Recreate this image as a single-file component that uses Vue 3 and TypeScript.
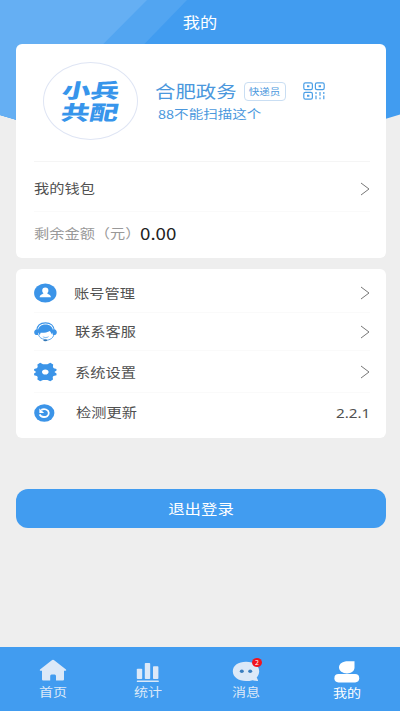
<script setup lang="ts">
interface MenuItem {
  id: 'account' | 'support' | 'settings' | 'update'
  label: string
  value?: string
}
interface Tab {
  id: 'home' | 'stats' | 'message' | 'mine'
  label: string
  badge?: number
}

const menu: MenuItem[] = [
  { id: 'account', label: '账号管理' },
  { id: 'support', label: '联系客服' },
  { id: 'settings', label: '系统设置' },
  { id: 'update', label: '检测更新', value: '2.2.1' },
]
const tabs: Tab[] = [
  { id: 'home', label: '首页' },
  { id: 'stats', label: '统计' },
  { id: 'message', label: '消息', badge: 2 },
  { id: 'mine', label: '我的' },
]
const activeTab: Tab['id'] = 'mine'
</script>

<template>
  <div class="screen">
    <svg class="backdrop" width="400" height="160" viewBox="0 0 400 160" aria-hidden="true">
      <defs>
        <clipPath id="arc"><path d="M0 0H400V114.5Q200 178 0 115Z" /></clipPath>
      </defs>
      <g clip-path="url(#arc)">
        <rect width="400" height="160" fill="#419cf0" />
        <path d="M0 0H187L32 160H0Z" fill="#52a5f1" />
        <path d="M0 0H147L0 148Z" fill="#65aff3" />
      </g>
    </svg>

    <header class="title"><span class="wide">我的</span></header>

    <main>
      <section class="card profile-card">
        <div class="profile">
          <div class="logo">
            <span class="logo-line">小兵</span>
            <span class="logo-line second">共配</span>
          </div>
          <div class="who">
            <div class="name-row">
              <span class="name wide">合肥政务</span>
              <span class="role"><span class="wide">快递员</span></span>
              <svg class="qr" width="22" height="18" viewBox="0 0 22 18" fill="none" stroke="#4b9fe6" stroke-width="1.2">
                <rect x="0.8" y="0.8" width="8.6" height="6.8" rx="1.6" />
                <rect x="12.4" y="0.8" width="8.8" height="6.8" rx="1.6" />
                <rect x="0.8" y="10.4" width="8.6" height="6.8" rx="1.6" />
                <path d="M4 4.2h2.4M15.6 4.2H18M4 13.8h2.4" stroke-width="2" />
                <path d="M13 10v2M13 13.5v3.8M17 10v3.8M17 15.4v1.9M20.8 10v2M20.8 13.5v3.8" />
              </svg>
            </div>
            <span class="nickname wide">88不能扫描这个</span>
          </div>
        </div>
        <div class="wallet">
          <span class="wide">我的钱包</span>
          <svg class="chevron" width="10" height="14" viewBox="0 0 10 14"><path d="M1 1L9 7L1 13" /></svg>
        </div>
        <div class="balance">
          <span class="balance-label wide">剩余金额（元）</span>
          <span class="amount wide">0.00</span>
        </div>
      </section>

      <section class="card menu-card">
        <div v-for="item in menu" :key="item.id" class="menu-row" :class="item.id">
          <svg class="menu-icon" width="23" height="20" viewBox="0 0 23 20">
            <template v-if="item.id === 'account'">
              <ellipse cx="11.3" cy="10" rx="11.2" ry="9.5" fill="#3b94e8" />
              <path d="M11.3 4.5c2 0 3.2 1.3 3.1 3 0 1.3-.6 2.2-1.3 2.8.3 1 3.7.9 3.8 4H5.7c.1-3.1 3.5-3 3.8-4-.7-.6-1.3-1.5-1.3-2.8 0-1.7 1.1-3 3.1-3Z" fill="#fff" />
            </template>
            <template v-else-if="item.id === 'support'">
              <path d="M2.7 9C3 3.7 6.6.9 11.5.9s8.6 2.8 8.8 8.1" fill="none" stroke="#3b94e8" stroke-width="1.3" />
              <path d="M3.800 10C3.800 5 7 2.500 11.500 2.500S19.200 5 19.200 10L18 12.500 15.900 8.900C13 10.600 9 11 6.600 10.700L5.800 13.200Z" fill="#3b94e8" />
              <path d="M4.200 7.500v5.500H2.300C.8 12.600.2 11.600.2 10.200s.9-2.500 2.100-2.700ZM18.800 7.500V13h1.900c1.500-.3 2.100-1.400 2.100-2.800s-.9-2.500-2.100-2.700Z" fill="#3b94e8" />
              <path d="M4.300 12.500C5.500 16 8 17 10.500 17.300M20 12.700c-.9 3.500-4 5.300-7.500 5.600" fill="none" stroke="#3b94e8" stroke-width=".8" />
              <path d="M8.500 14.300c2 1.100 4.700 1 6.500-.3-.5 1.800-1.800 2.200-3.300 2.200s-2.800-.7-3.200-1.900Z" fill="#8dc1f2" />
              <ellipse cx="11.3" cy="18.300" rx="2" ry="1" fill="#3477b5" />
            </template>
            <template v-else-if="item.id === 'settings'">
              <path fill="#3b94e8" fill-rule="evenodd" d="M6.200.8 9 2.300h4.400L16.300.8l2.900 1.600-.3 2.700.9 1.100 2.700.9v1.500l-2.100 1.500 2.100 1.500v1.600l-3 .7-.8 1.200.3 2.500-2.700 1.700-2.900-1.400H9l-2.800 1.400-2.800-1.700.3-2.500-.9-1.200-2.700-.7v-1.600l2.100-1.500L.1 8.600V7.100l2.700-.9.900-1.100-.3-2.700ZM11.300 7.400c-2 0-3.300 1.100-3.300 2.600s1.300 2.600 3.300 2.600 3.300-1.100 3.300-2.600-1.300-2.600-3.300-2.600Z" />
            </template>
            <template v-else>
              <ellipse cx="10.3" cy="10" rx="10.1" ry="8.7" fill="#3b94e8" />
              <path d="M7.300 6.900C10.300 5.200 14.500 6.600 14.800 9.900c.1 3-2.800 4.300-5 4.100-2.100-.1-3.600-1.200-4.200-2.700" fill="none" stroke="#fff" stroke-width="1.800" />
              <path d="M5.400 5.600v4.300h4.800Z" fill="#fff" />
            </template>
          </svg>
          <span class="menu-label wide">{{ item.label }}</span>
          <span v-if="item.value" class="version wide">{{ item.value }}</span>
          <svg v-else class="chevron" width="10" height="14" viewBox="0 0 10 14"><path d="M1 1L9 7L1 13" /></svg>
        </div>
      </section>

      <button class="logout" type="button"><span class="wide">退出登录</span></button>
    </main>

    <nav class="tabs">
      <div v-for="tab in tabs" :key="tab.id" class="tab" :class="[tab.id, { active: tab.id === activeTab }]">
        <div class="tab-icon">
          <svg width="28" height="24" viewBox="0 0 28 24" fill="currentColor">
            <path v-if="tab.id === 'home'" d="M14 .8Q14.7.8 15.5 1.400L27 10.500q.8 1-.4 1.300H25v8.700q0 1.100-1.100 1.100H17v-4.500q0-1.500-1.300-1.500h-3.200q-1.300 0-1.300 1.500v4.500H4.200q-1.200 0-1.200-1.100v-8.700H1.400Q.2 11.500 1 10.500L12.500 1.400Q13.3.8 14 .8Z" />
            <g v-else-if="tab.id === 'stats'">
              <rect x="2.800" y="9.800" width="5.400" height="10.300" rx=".8" />
              <rect x="10.800" y="4" width="5.400" height="16.100" rx=".8" />
              <rect x="19" y="7.200" width="5.400" height="12.900" rx=".8" />
              <rect x="2.800" y="21.500" width="22" height="1.500" rx=".5" />
            </g>
            <g v-else-if="tab.id === 'message'">
              <path d="M14 2.800c7.500 0 13.200 4 13.200 9.500 0 2.500-1.100 4.800-2.500 6.100l1.300 2.800q.2 1-1 .9l-4.400-.9c-2 .5-4.300.9-6.600.9C6.400 22.100.8 18 .8 12.300S6.400 2.800 14 2.800Z" />
              <ellipse cx="9.800" cy="12.300" rx="2" ry="1.700" fill="#3a7ebf" />
              <ellipse cx="18.200" cy="12.300" rx="2" ry="1.700" fill="#3a7ebf" />
            </g>
            <g v-else>
              <path d="M15 2.200h6.500v6c0 4-3.300 6.200-7.500 6.200-4.600 0-8-2.500-8-6.100C6 4.700 9.500 2.200 15 2.200Z" />
              <rect x="1.400" y="15.100" width="24.800" height="8.300" rx="4.100" />
            </g>
          </svg>
          <span v-if="tab.badge" class="badge">{{ tab.badge }}</span>
        </div>
        <span class="tab-label wide">{{ tab.label }}</span>
      </div>
    </nav>
  </div>
</template>

<style>
body {
  margin: 0;
  background: #eee;
}
</style>

<style scoped>
.screen {
  position: relative;
  display: flex;
  flex-direction: column;
  width: 400px;
  height: 711px;
  overflow: hidden;
  background: #eee;
  color: #505050;
  font-family: "Noto Sans CJK SC", "Noto Sans", sans-serif;
  font-size: 13px;
  line-height: 1;
}
.backdrop {
  position: absolute;
  top: 0;
  left: 0;
}
.wide {
  display: inline-block;
  padding-bottom: 2px;
  white-space: nowrap;
  transform: scaleX(1.17);
  transform-origin: left center;
}
.title {
  position: relative;
  flex: none;
  display: flex;
  align-items: center;
  justify-content: center;
  height: 44px;
  color: #fff;
  font-size: 15px;
}
.title .wide {
  transform: scaleX(1.15);
  transform-origin: center;
}
main {
  position: relative;
  flex: 1;
  display: flex;
  flex-direction: column;
  padding: 0 14px 0 16px;
}
.card {
  box-sizing: border-box;
  border-radius: 6px;
  background: #fff;
  padding: 0 16px 0 18px;
}
.profile-card {
  height: 214px;
}
.profile {
  box-sizing: border-box;
  display: flex;
  height: 118px;
  padding: 18px 0 0 9px;
  border-bottom: 1px solid #f5f5f5;
}
.logo {
  box-sizing: border-box;
  flex: none;
  display: flex;
  flex-direction: column;
  align-items: center;
  width: 95px;
  height: 78px;
  padding-top: 16px;
  border: 1px solid #dfe5f4;
  border-radius: 50%;
  color: #3795eb;
  font-size: 20px;
  font-weight: 900;
}
.logo-line {
  height: 22px;
  line-height: 22px;
  transform: scaleX(1.43) skewX(-8deg);
}
.logo-line.second {
  margin-left: -2px;
}
.who {
  padding: 19px 0 0 17px;
}
.name-row {
  display: flex;
  align-items: center;
  height: 20px;
  color: #4b98dd;
}
.name {
  width: 89px;
  font-size: 17px;
  transform: scaleX(1.2);
}
.role {
  box-sizing: border-box;
  flex: none;
  display: flex;
  align-items: center;
  justify-content: center;
  width: 42px;
  height: 19px;
  border: 1px solid #c9def3;
  border-radius: 4px;
  font-size: 9px;
}
.role .wide {
  padding-bottom: 0;
  transform-origin: center;
}
.qr {
  flex: none;
  margin-left: 17px;
}
.nickname {
  margin: 7px 0 0 3px;
  color: #4b98dd;
  font-size: 12px;
  transform: scaleX(1.21);
}
.wallet {
  box-sizing: border-box;
  display: flex;
  align-items: center;
  justify-content: space-between;
  height: 50px;
  border-bottom: 1px solid #fafafa;
  padding-top: 4px;
}
.chevron {
  flex: none;
  fill: none;
  stroke: #777;
  stroke-width: 1;
}
.balance {
  display: flex;
  align-items: center;
  height: 43px;
}
.balance-label {
  width: 106px;
  color: #999;
}
.amount {
  color: #222;
  font-size: 16px;
}
.menu-card {
  display: grid;
  grid-template-rows: 44px 38px 42px 44px;
  height: 169px;
  margin-top: 11px;
}
.menu-row {
  box-sizing: border-box;
  display: flex;
  align-items: center;
  border-bottom: 1px solid #fafafa;
}
.menu-row.account {
  padding-top: 5px;
}
.menu-row.update {
  border-bottom: 0;
  padding-bottom: 6px;
}
.menu-row.update,
.menu-row.settings {
  padding-top: 1px;
}
.menu-icon {
  flex: none;
  margin-right: 18px;
}
.menu-row.account .menu-icon {
  margin-right: 17px;
}
.menu-row.update .menu-icon {
  margin-right: 19px;
}
.menu-label {
  margin-right: auto;
}
.version {
  padding: 2px 0 0;
  font-family: "Noto Sans", sans-serif;
  transform-origin: right center;
}
.logout {
  display: flex;
  align-items: center;
  justify-content: center;
  height: 39px;
  margin-top: 51px;
  padding: 0;
  border: 0;
  border-radius: 12px;
  background: #419cf0;
  color: #fff;
  font: 14px/1 "Noto Sans CJK SC", sans-serif;
}
.logout .wide {
  transform-origin: center;
}
.tabs {
  position: relative;
  flex: none;
  display: grid;
  grid-template-columns: 106px 84px 112px 90px;
  height: 64px;
  background: #419cf0;
  color: #dce9f8;
}
.tab {
  display: flex;
  flex-direction: column;
  align-items: center;
  padding-top: 12px;
}
.tab.active {
  color: #fff;
}
.tab-icon {
  position: relative;
  height: 24px;
}
.tab-label {
  margin-top: 3px;
  font-size: 12px;
  transform-origin: center;
}
.tab.active .tab-label {
  margin-top: 4px;
}
.badge {
  position: absolute;
  top: -1px;
  right: -2px;
  width: 10px;
  height: 9px;
  border-radius: 50%;
  background: #f0141e;
  color: #fff;
  font-size: 7px;
  line-height: 9px;
  text-align: center;
}
</style>
